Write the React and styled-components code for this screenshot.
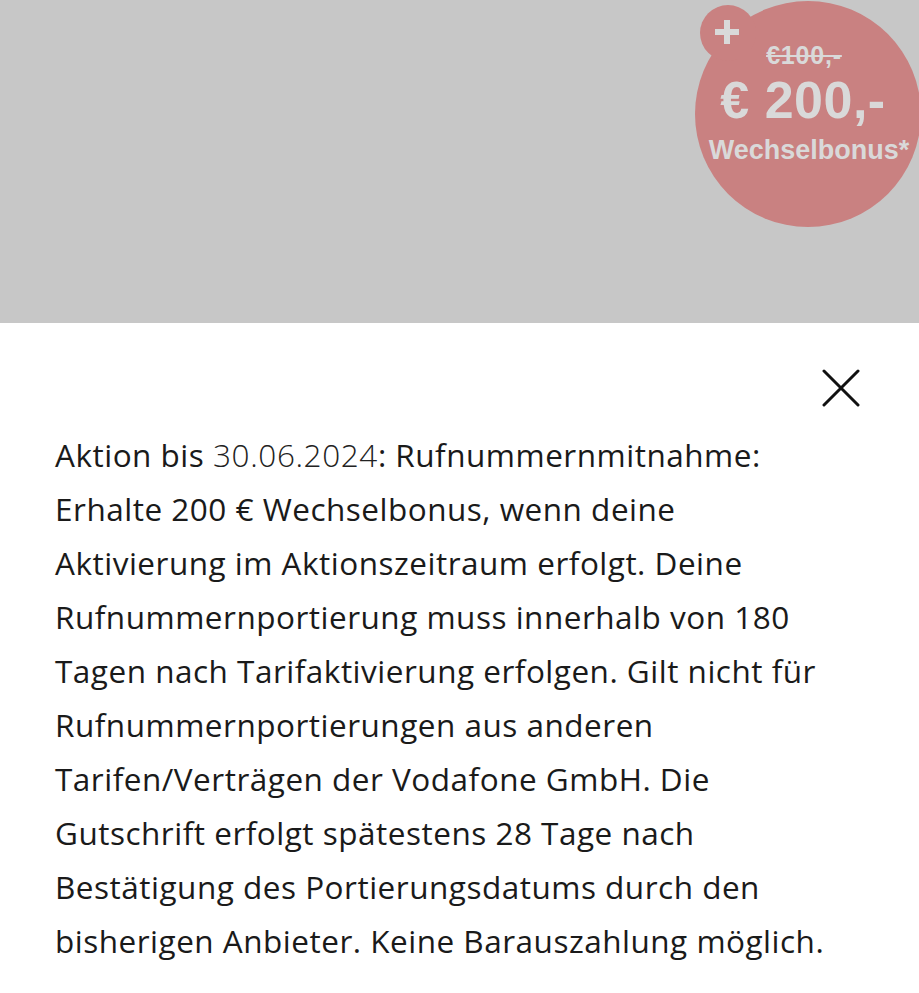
import React from 'react';
import styled, { createGlobalStyle } from 'styled-components';

const GlobalStyle = createGlobalStyle`
  html, body {
    margin: 0;
    padding: 0;
    background: #ffffff;
  }
  body {
    font-family: "Open Sans", "Noto Sans", sans-serif;
    overflow: hidden;
  }
`;

const Page = styled.div`
  width: 919px;
  height: 993px;
  display: flex;
  flex-direction: column;
  overflow: hidden;
`;

const Backdrop = styled.div`
  height: 323px;
  background: #c7c7c7;
  position: relative;
  overflow: hidden;
  flex-shrink: 0;
`;

const Badge = styled.div`
  position: absolute;
  left: 695px;
  top: 1px;
  width: 226px;
  height: 226px;
  border-radius: 50%;
  background: #c98181;
  color: #d9d9d9;
  font-family: "Liberation Sans", Arial, sans-serif;
  font-weight: bold;
  display: flex;
  flex-direction: column;
  align-items: center;
  padding-top: 42px;
  box-sizing: border-box;
  line-height: 1;

  &::before {
    content: '';
    position: absolute;
    left: 5px;
    top: 4px;
    width: 56px;
    height: 56px;
    border-radius: 50%;
    background: #c98181;
  }
`;

const Plus = styled.svg`
  position: absolute;
  left: 18px;
  top: 17px;
  z-index: 1;
`;

const OldPrice = styled.span`
  position: relative;
  font-size: 25px;
  letter-spacing: 0.8px;
  text-decoration: line-through;
  text-decoration-thickness: 2px;
  margin-left: -8px;
`;

const NewPrice = styled.span`
  position: relative;
  font-size: 52px;
  letter-spacing: 0.5px;
  margin-top: 6px;
  margin-left: -10px;
`;

const BonusLabel = styled.span`
  position: relative;
  font-size: 27px;
  margin-top: 11px;
  margin-left: 2px;
`;

const Sheet = styled.div`
  flex: 1;
  background: #ffffff;
  padding: 40px 55px 0 55px;
  display: flex;
  flex-direction: column;
`;

const CloseRow = styled.div`
  display: flex;
  justify-content: flex-end;
  margin-right: -2px;
`;

const CloseButton = styled.button`
  width: 50px;
  height: 50px;
  border: none;
  background: none;
  padding: 0;
  display: flex;
  align-items: center;
  justify-content: center;
  cursor: pointer;
`;

const Text = styled.p`
  margin: 15px 0 0 0;
  font-size: 31.5px;
  letter-spacing: 0.5px;
  line-height: 54px;
  color: #1a1a1a;
  white-space: nowrap;
`;

const Line = styled.span`
  display: block;
`;

const DateSpan = styled.span`
  font-weight: 300;
  letter-spacing: 0.6px;
  color: #222;
`;

const lines = [
  'Erhalte 200 € Wechselbonus, wenn deine',
  'Aktivierung im Aktionszeitraum erfolgt. Deine',
  'Rufnummernportierung muss innerhalb von 180',
  'Tagen nach Tarifaktivierung erfolgen. Gilt nicht für',
  'Rufnummernportierungen aus anderen',
  'Tarifen/Verträgen der Vodafone GmbH. Die',
  'Gutschrift erfolgt spätestens 28 Tage nach',
  'Bestätigung des Portierungsdatums durch den',
  'bisherigen Anbieter. Keine Barauszahlung möglich.',
];

export default function App() {
  return (
    <Page>
      <GlobalStyle />
      <Backdrop>
        <Badge>
          <Plus width="28" height="28" viewBox="0 0 28 28">
            <path d="M14 2 V26 M2 14 H26" stroke="#d9d9d9" strokeWidth="6" />
          </Plus>
          <OldPrice>€100,-</OldPrice>
          <NewPrice>€ 200,-</NewPrice>
          <BonusLabel>Wechselbonus*</BonusLabel>
        </Badge>
      </Backdrop>
      <Sheet>
        <CloseRow>
          <CloseButton aria-label="Schließen">
            <svg width="38" height="38" viewBox="0 0 38 38">
              <path d="M2 2 L36 36 M36 2 L2 36" stroke="#111" strokeWidth="3" strokeLinecap="round" />
            </svg>
          </CloseButton>
        </CloseRow>
        <Text>
          <Line>
            Aktion bis <DateSpan>30.06.2024</DateSpan>: Rufnummernmitnahme:
          </Line>
          {lines.map((l) => (
            <Line key={l}>{l}</Line>
          ))}
        </Text>
      </Sheet>
    </Page>
  );
}
